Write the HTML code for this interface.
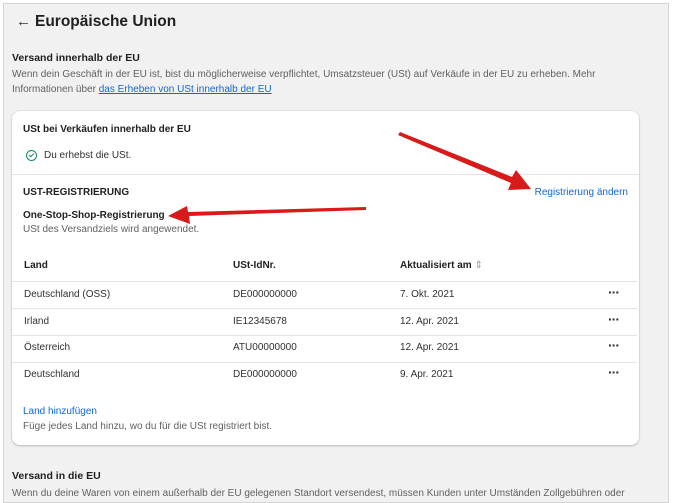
<!DOCTYPE html>
<html><head><meta charset="utf-8"><style>
*{margin:0;padding:0;box-sizing:border-box}
body{width:674px;height:500px;overflow:hidden;background:#fff;font-family:"Liberation Sans",sans-serif;color:#303030;position:relative}
.frame{position:absolute;left:3px;top:3px;width:666px;height:500px;background:#f1f1f1;border:1px solid #d4d4d4}
.a{position:absolute;white-space:nowrap}
.t{font-size:10px}
.b{font-weight:bold;color:#1f1f1f}
.card{position:absolute;left:12px;top:111px;width:627px;height:334px;background:#fff;border-radius:8px;box-shadow:0 1px 2px rgba(0,0,0,.2),0 0 0 1px #e6e6e6}
.link{color:#1366d6}
.g{color:#616161}
.d{position:absolute;left:596px;font-size:14px;font-weight:bold;color:#303030;line-height:10px;letter-spacing:-1px}
</style></head><body>
<div class="frame"></div>
<div class="a" style="left:16px;top:13px;font-size:15px">←</div>
<div class="a b" style="left:35px;top:13px;font-size:15.5px">Europäische Union</div>
<div class="a b" style="left:12px;top:52px;font-size:10.5px">Versand innerhalb der EU</div>
<div class="a t g" style="left:12px;top:69px">Wenn dein Geschäft in der EU ist, bist du möglicherweise verpflichtet, Umsatzsteuer (USt) auf Verkäufe in der EU zu erheben. Mehr</div>
<div class="a t g" style="left:12px;top:84px">Informationen über <span class="link" style="text-decoration:underline">das Erheben von USt innerhalb der EU</span></div>
<div class="card">
<div class="a t b" style="left:11px;top:13px">USt bei Verkäufen innerhalb der EU</div>
<div class="a" style="left:14px;top:39px;width:11px;height:11px;border:1.3px solid #1a8a5a;border-radius:50%"></div>
<div class="a" style="left:17.5px;top:41px;width:3px;height:5px;border-right:1.3px solid #1a8a5a;border-bottom:1.3px solid #1a8a5a;transform:rotate(45deg)"></div>
<div class="a t" style="left:32px;top:39px">Du erhebst die USt.</div>
<div style="position:absolute;left:0;top:63px;width:627px;height:1px;background:#e3e3e3"></div>
<div class="a t b" style="left:11px;top:76px">UST-REGISTRIERUNG</div>
<div class="a t link" style="right:11px;top:76px">Registrierung ändern</div>
<div class="a t b" style="left:11px;top:99px">One-Stop-Shop-Registrierung</div>
<div class="a t g" style="left:11px;top:113px">USt des Versandziels wird angewendet.</div>
<div class="a t b" style="left:12px;top:149px">Land</div>
<div class="a t b" style="left:221px;top:149px">USt-IdNr.</div>
<div class="a t b" style="left:388px;top:149px">Aktualisiert am <span style="font-weight:normal;color:#999">⇕</span></div>
<div style="position:absolute;left:0;top:170px;width:625px;height:1px;background:#e3e3e3"></div>
<div style="position:absolute;left:0;top:197px;width:625px;height:1px;background:#e3e3e3"></div>
<div style="position:absolute;left:0;top:224px;width:625px;height:1px;background:#e3e3e3"></div>
<div style="position:absolute;left:0;top:251px;width:625px;height:1px;background:#e3e3e3"></div>
<div class="a t" style="left:12px;top:178px">Deutschland (OSS)</div><div class="a t" style="left:221px;top:178px">DE000000000</div><div class="a t" style="left:388px;top:178px">7. Okt. 2021</div><div class="d" style="top:176px">···</div>
<div class="a t" style="left:12px;top:205px">Irland</div><div class="a t" style="left:221px;top:205px">IE12345678</div><div class="a t" style="left:388px;top:205px">12. Apr. 2021</div><div class="d" style="top:203px">···</div>
<div class="a t" style="left:12px;top:231px">Österreich</div><div class="a t" style="left:221px;top:231px">ATU00000000</div><div class="a t" style="left:388px;top:231px">12. Apr. 2021</div><div class="d" style="top:229px">···</div>
<div class="a t" style="left:12px;top:258px">Deutschland</div><div class="a t" style="left:221px;top:258px">DE000000000</div><div class="a t" style="left:388px;top:258px">9. Apr. 2021</div><div class="d" style="top:256px">···</div>
<div class="a t link" style="left:11px;top:295px">Land hinzufügen</div>
<div class="a t g" style="left:11px;top:310px">Füge jedes Land hinzu, wo du für die USt registriert bist.</div>
</div>
<div class="a b" style="left:12px;top:470px;font-size:10.5px">Versand in die EU</div>
<div class="a t g" style="left:12px;top:488px">Wenn du deine Waren von einem außerhalb der EU gelegenen Standort versendest, müssen Kunden unter Umständen Zollgebühren oder</div>
<svg class="a" style="left:0;top:0" width="674" height="500">
<polygon points="398,135 400,132 512,177 516,170 531,189 508,190 511,183" fill="#d81a1a"/>
<polygon points="366,207 366,210 189,216 190,224 168,216 187,206 188,212" fill="#d81a1a"/>
</svg>
</body></html>
